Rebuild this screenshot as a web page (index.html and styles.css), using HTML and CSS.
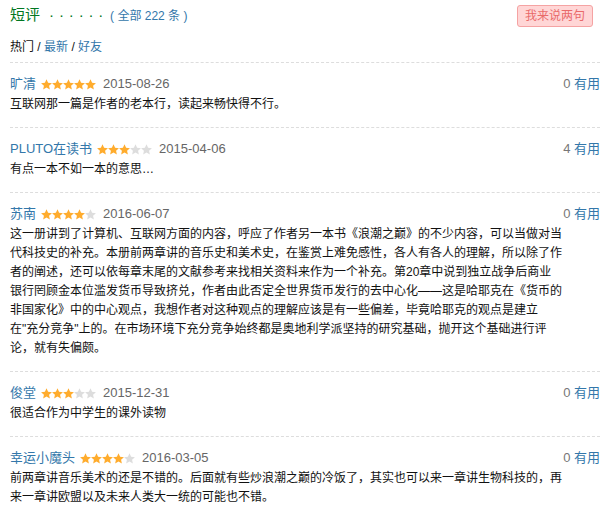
FILE: index.html
```html
<!DOCTYPE html>
<html lang="zh-CN">
<head>
<meta charset="utf-8">
<title>短评</title>
<link rel="stylesheet" href="styles.css">
</head>
<body>
<svg class="defs" width="0" height="0" aria-hidden="true">
  <symbol id="star" viewBox="0 0 11 11">
    <path d="M5.5 0.2L7.09 3.72L10.92 4.14L8.07 6.73L8.85 10.51L5.5 8.6L2.15 10.51L2.93 6.73L0.08 4.14L3.91 3.72Z"/>
  </symbol>
</svg>
<div class="comments">
  <div class="head">
    <h2 class="title">短评<span class="dots">&nbsp;&nbsp;·&nbsp;·&nbsp;·&nbsp;·&nbsp;·&nbsp;·</span><span class="pl">&nbsp;( <a href="#">全部 222 条</a> )</span></h2>
    <a class="btn" href="#">我来说两句</a>
  </div>
  <div class="tabs"><span class="on">热门</span> / <a href="#">最新</a> / <a href="#">好友</a></div>
  <ul class="list">
    <li class="item">
      <div class="meta">
        <span class="info"><a class="name" href="#">旷清</a>
          <svg class="stars" viewBox="0 0 55 11"><use href="#star" x="0" width="11" height="11" class="on"/><use href="#star" x="11" width="11" height="11" class="on"/><use href="#star" x="22" width="11" height="11" class="on"/><use href="#star" x="33" width="11" height="11" class="on"/><use href="#star" x="44" width="11" height="11" class="on"/></svg>
          <span class="time">2015-08-26</span></span>
        <span class="votes"><span class="num">0</span> <a href="#">有用</a></span>
      </div>
      <p class="text">互联网那一篇是作者的老本行，读起来畅快得不行。</p>
    </li>
    <li class="item">
      <div class="meta">
        <span class="info"><a class="name" href="#">PLUTO在读书</a>
          <svg class="stars" viewBox="0 0 55 11"><use href="#star" x="0" width="11" height="11" class="on"/><use href="#star" x="11" width="11" height="11" class="on"/><use href="#star" x="22" width="11" height="11" class="on"/><use href="#star" x="33" width="11" height="11" class="off"/><use href="#star" x="44" width="11" height="11" class="off"/></svg>
          <span class="time">2015-04-06</span></span>
        <span class="votes"><span class="num">4</span> <a href="#">有用</a></span>
      </div>
      <p class="text">有点一本不如一本的意思…</p>
    </li>
    <li class="item">
      <div class="meta">
        <span class="info"><a class="name" href="#">苏南</a>
          <svg class="stars" viewBox="0 0 55 11"><use href="#star" x="0" width="11" height="11" class="on"/><use href="#star" x="11" width="11" height="11" class="on"/><use href="#star" x="22" width="11" height="11" class="on"/><use href="#star" x="33" width="11" height="11" class="on"/><use href="#star" x="44" width="11" height="11" class="off"/></svg>
          <span class="time">2016-06-07</span></span>
        <span class="votes"><span class="num">0</span> <a href="#">有用</a></span>
      </div>
      <p class="text">这一册讲到了计算机、互联网方面的内容，呼应了作者另一本书《浪潮之巅》的不少内容，可以当做对当代科技史的补充。本册前两章讲的音乐史和美术史，在鉴赏上难免感性，各人有各人的理解，所以除了作者的阐述，还可以依每章末尾的文献参考来找相关资料来作为一个补充。第20章中说到独立战争后商业银行罔顾金本位滥发货币导致挤兑，作者由此否定全世界货币发行的去中心化——这是哈耶克在《货币的非国家化》中的中心观点，我想作者对这种观点的理解应该是有一些偏差，毕竟哈耶克的观点是建立在"充分竞争"上的。在市场环境下充分竞争始终都是奥地利学派坚持的研究基础，抛开这个基础进行评论，就有失偏颇。</p>
    </li>
    <li class="item">
      <div class="meta">
        <span class="info"><a class="name" href="#">俊堂</a>
          <svg class="stars" viewBox="0 0 55 11"><use href="#star" x="0" width="11" height="11" class="on"/><use href="#star" x="11" width="11" height="11" class="on"/><use href="#star" x="22" width="11" height="11" class="on"/><use href="#star" x="33" width="11" height="11" class="off"/><use href="#star" x="44" width="11" height="11" class="off"/></svg>
          <span class="time">2015-12-31</span></span>
        <span class="votes"><span class="num">0</span> <a href="#">有用</a></span>
      </div>
      <p class="text">很适合作为中学生的课外读物</p>
    </li>
    <li class="item">
      <div class="meta">
        <span class="info"><a class="name" href="#">幸运小魔头</a>
          <svg class="stars" viewBox="0 0 55 11"><use href="#star" x="0" width="11" height="11" class="on"/><use href="#star" x="11" width="11" height="11" class="on"/><use href="#star" x="22" width="11" height="11" class="on"/><use href="#star" x="33" width="11" height="11" class="on"/><use href="#star" x="44" width="11" height="11" class="off"/></svg>
          <span class="time">2016-03-05</span></span>
        <span class="votes"><span class="num">0</span> <a href="#">有用</a></span>
      </div>
      <p class="text">前两章讲音乐美术的还是不错的。后面就有些炒浪潮之巅的冷饭了，其实也可以来一章讲生物科技的，再来一章讲欧盟以及未来人类大一统的可能也不错。</p>
    </li>
  </ul>
</div>
</body>
</html>
```

FILE: styles.css
```css
* {
  box-sizing: border-box;
}

body {
  margin: 0;
  background: #fff;
  color: #111;
  font: 12px "Liberation Sans", Arial, "Noto Sans CJK SC", sans-serif;
}

a {
  color: #37a;
  text-decoration: none;
}

.defs {
  position: absolute;
  width: 0;
  height: 0;
}

.comments {
  width: 590px;
  margin-left: 10px;
}

.head {
  display: flex;
  align-items: center;
  justify-content: space-between;
  height: 31px;
}

.title {
  margin: 0;
  font-size: 15px;
  font-weight: normal;
  line-height: 20px;
  color: #072;
}

.dots {
  color: #072;
  letter-spacing: 0.35px;
}

.pl {
  margin-left: 3px;
  font-size: 12px;
  color: #37a;
}

.btn {
  display: block;
  height: 22px;
  margin-right: 7px;
  padding: 0 7px;
  border: 1px solid #f5a3a3;
  border-radius: 3px;
  background: #ffd6d6;
  color: #e96a6a;
  font-size: 12px;
  line-height: 20px;
}

.tabs {
  padding: 7px 0 6px;
  line-height: 18px;
  border-bottom: 1px dashed #ddd;
  color: #111;
}

.list {
  list-style: none;
  margin: 0;
  padding: 0;
}

.item {
  padding: 11px 0 13px;
  border-bottom: 1px dashed #ddd;
}

.item:last-child {
  border-bottom: 0;
}

.meta {
  display: flex;
  align-items: center;
  justify-content: space-between;
  height: 20px;
  font-size: 13px;
  line-height: 20px;
}

.info {
  display: flex;
  align-items: center;
  gap: 5px;
}

.stars {
  width: 55px;
  height: 11px;
}

.stars .on {
  fill: #ffac2d;
}

.stars .off {
  fill: #ddd;
}

.time {
  margin-left: 2px;
  color: #666;
}

.votes .num {
  color: #777;
}

.text {
  width: 552px;
  margin: 1px 0 0;
  line-height: 19px;
}
```
